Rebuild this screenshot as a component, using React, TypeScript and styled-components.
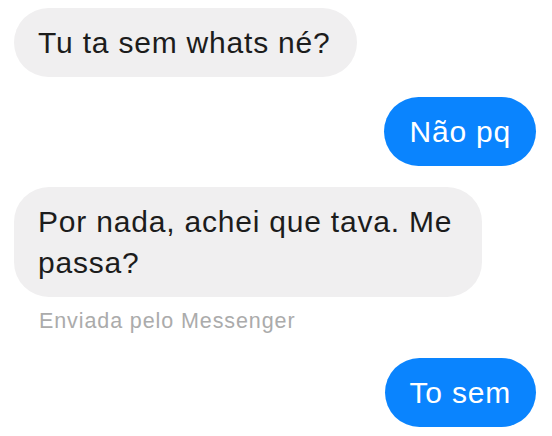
import React from "react";
import styled, { createGlobalStyle } from "styled-components";

const Global = createGlobalStyle`
  html, body { margin: 0; padding: 0; background: #ffffff; }
  body { font-family: "Liberation Sans", Arial, Helvetica, sans-serif; -webkit-font-smoothing: antialiased; }
`;

const Thread = styled.div`
  width: 552px;
  height: 436px;
  box-sizing: border-box;
  padding: 8px 16px 0 14px;
  display: flex;
  flex-direction: column;
  overflow: hidden;
`;

const Row = styled.div<{ $mine?: boolean; $gap: number }>`
  display: flex;
  flex-direction: column;
  align-items: ${(p) => (p.$mine ? "flex-end" : "flex-start")};
  margin-top: ${(p) => p.$gap}px;
`;

const Bubble = styled.div<{ $mine?: boolean }>`
  box-sizing: border-box;
  max-width: 468px;
  padding: 14px ${(p) => (p.$mine ? "25px" : "26px")} 14px ${(p) => (p.$mine ? "25px" : "24px")};
  border-radius: 35px;
  font-size: 30px;
  line-height: 41px;
  letter-spacing: 0.8px;
  background: ${(p) => (p.$mine ? "#0a84fe" : "#f0eff0")};
  color: ${(p) => (p.$mine ? "#ffffff" : "#1c1c1c")};
`;

const Caption = styled.div`
  margin: 12px 0 0 25px;
  font-size: 21.5px;
  line-height: 24px;
  letter-spacing: 0.9px;
  color: #ababab;
`;

export default function App() {
  return (
    <>
      <Global />
      <Thread>
        <Row $gap={0}>
          <Bubble>Tu ta sem whats né?</Bubble>
        </Row>
        <Row $mine $gap={20}>
          <Bubble $mine>Não pq</Bubble>
        </Row>
        <Row $gap={21}>
          <Bubble>Por nada, achei que tava. Me passa?</Bubble>
          <Caption>Enviada pelo Messenger</Caption>
        </Row>
        <Row $mine $gap={25}>
          <Bubble $mine>To sem</Bubble>
        </Row>
      </Thread>
    </>
  );
}
